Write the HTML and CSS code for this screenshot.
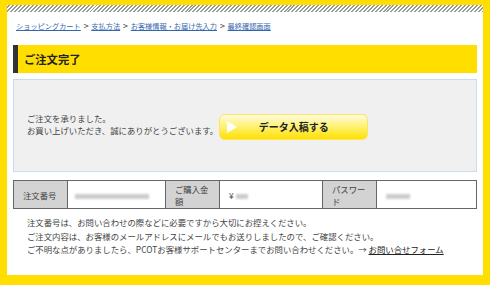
FILE: index.html
```html
<!DOCTYPE html>
<html lang="ja">
<head>
  <meta charset="UTF-8" />
  <meta name="viewport" content="width=device-width, initial-scale=1" />
  <title>ご注文完了</title>
  <link rel="stylesheet" href="styles.css">
</head>
<body>

<div class="page">
  <div class="stripe"></div>
  <div class="content">

    <!-- パンくず -->
    <nav class="crumbs">
      <a href="#">ショッピングカート</a><span class="sep">&gt;</span>
      <a href="#">支払方法</a><span class="sep">&gt;</span>
      <a href="#">お客様情報・お届け先入力</a><span class="sep">&gt;</span>
      <a href="#">最終確認画面</a>
    </nav>

    <h1 class="title">ご注文完了</h1>

    <div class="thanks">
      <p>ご注文を承りました。<br>お買い上げいただき、誠にありがとうございます。</p>
      <a href="#" class="btn-upload"><span class="play"></span>データ入稿する</a>
    </div>

    <table class="order">
      <tr>
        <th class="th1">注文番号</th>
        <td class="td1"><span class="blur w1"></span></td>
        <th class="th2">ご購入金額</th>
        <td class="td2">¥ <span class="blur w2"></span></td>
        <th class="th3">パスワード</th>
        <td class="td3"><span class="blur w3"></span></td>
      </tr>
    </table>

    <p class="notes">
      注文番号は、お問い合わせの際などに必要ですから大切にお控えください。<br>
      ご注文内容は、お客様のメールアドレスにメールでもお送りしましたので、ご確認ください。<br>
      ご不明な点がありましたら、PCOTお客様サポートセンターまでお問い合わせください。→ <a href="#">お問い合せフォーム</a>
    </p>

  </div>
</div>

</body>
</html>
```

FILE: styles.css
```css
html, body {
  margin: 0;
}

body {
  height: 285px;
  box-sizing: border-box;
  padding: 5px 7px 10px;
  background: #ffde00;
  font-family: "Noto Sans CJK JP", "Noto Sans", sans-serif;
  color: #444;
  overflow: hidden;
}

.page {
  height: 270px;
  background: #fff;
}

.stripe {
  height: 7px;
  background: repeating-linear-gradient(-45deg, #9a9a9a 0 1.4px, #fff 1.4px 2.8px);
}

.content {
  padding: 0 6px;
}

/* パンくず */
.crumbs {
  padding: 5px 3px 0;
  height: 18px;
  font-size: 7.2px;
  line-height: 18px;
  white-space: nowrap;
}

.crumbs a {
  color: #3566ad;
  text-decoration: underline;
}

.crumbs .sep {
  display: inline-block;
  margin: 0 1px 0 3px;
  color: #333;
  font-size: 9px;
}

.title {
  margin: 10px 0 0;
  height: 28px;
  line-height: 28px;
  padding-left: 6px;
  border-left: 5px solid #333;
  background: #ffde00;
  color: #222;
  font-size: 11.3px;
  font-weight: bold;
}

.thanks {
  margin-top: 6px;
  height: 91px;
  border: 1px solid #c7ddee;
  background: #f0f0f0;
  display: flex;
  align-items: center;
  padding-left: 13px;
  gap: 1px;
}

.thanks p {
  margin: 0 0 3px;
  font-size: 8.4px;
  line-height: 12.5px;
  color: #444;
}

.btn-upload {
  width: 149px;
  height: 26px;
  box-sizing: border-box;
  border: 1px solid #fbe75a;
  border-radius: 6px;
  background: linear-gradient(#fffbe0, #fff27a 45%, #ffe000);
  display: flex;
  align-items: center;
  justify-content: center;
  position: relative;
  color: #222;
  font-size: 10px;
  font-weight: bold;
  text-decoration: none;
  margin-top: 2px;
}

.btn-upload .play {
  position: absolute;
  left: 7px;
  top: 6px;
  width: 0;
  height: 0;
  border-top: 6px solid transparent;
  border-bottom: 6px solid transparent;
  border-left: 10px solid #fff;
}

.order {
  margin-top: 8px;
  width: 100%;
  border-collapse: collapse;
  font-size: 8.4px;
  line-height: 12px;
}

.order th,
.order td {
  border: 1px solid #666;
  height: 28px;
  box-sizing: border-box;
  padding: 1px 9px;
  text-align: left;
  font-weight: normal;
  color: #444;
}

.order th {
  background: #d3d3d3;
}

.th1 { width: 54px; }
.td1 { width: 98px; }
.th2 { width: 54px; }
.td2 { width: 103px; }
.th3 { width: 54px; }

.blur {
  display: inline-block;
  height: 5px;
  background: #ccc;
  filter: blur(1px);
  vertical-align: middle;
}

.w1 { width: 74px; margin-left: -2px; }
.w2 { width: 12px; }
.w3 { width: 24px; }

.notes {
  margin: 7px 0 0;
  padding-left: 14px;
  font-size: 8.4px;
  line-height: 13.5px;
  color: #444;
  white-space: nowrap;
}

.notes a {
  color: #222;
  text-decoration: underline;
}
```
